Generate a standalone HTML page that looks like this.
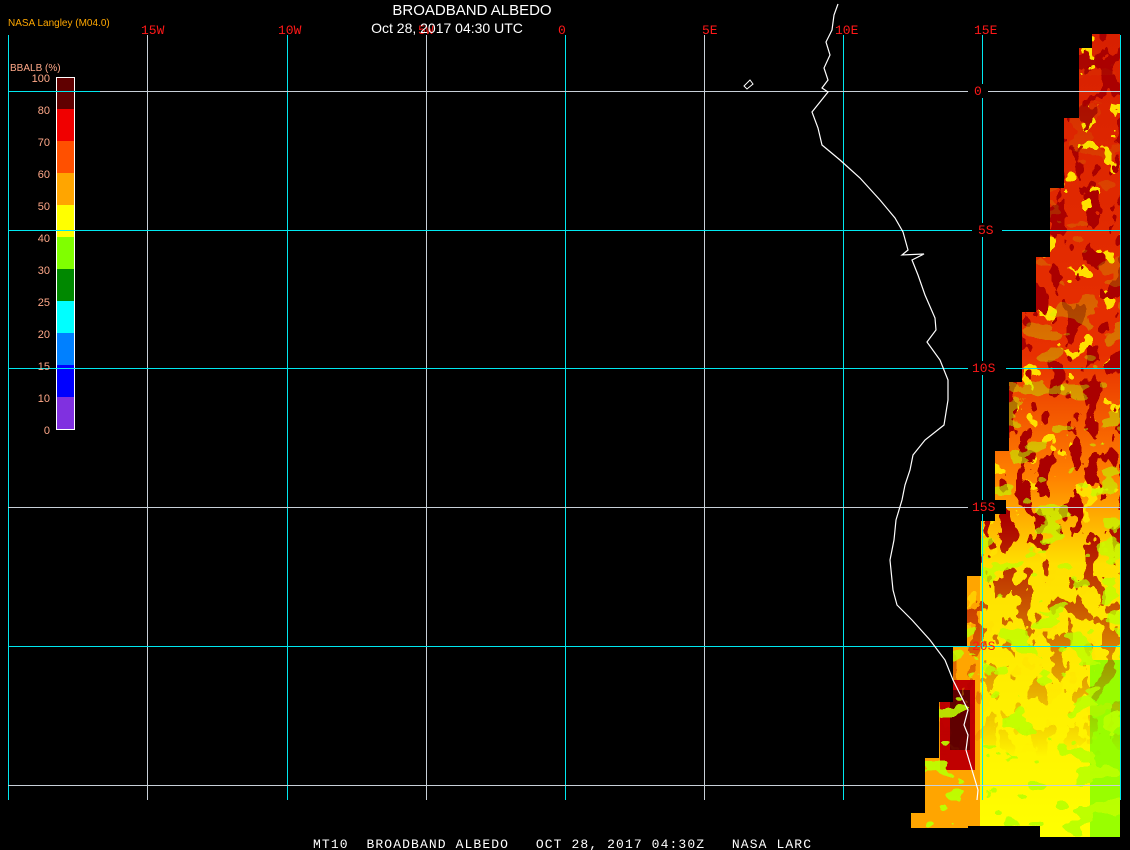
<!DOCTYPE html>
<html><head><meta charset="utf-8"><style>
html,body{margin:0;padding:0;background:#000;width:1130px;height:850px;overflow:hidden}
svg{display:block}
</style></head><body>
<svg width="1130" height="850" viewBox="0 0 1130 850" xmlns="http://www.w3.org/2000/svg">
<defs>
<clipPath id="dc"><polygon points="1092,34 1120,34 1120,837 1040,837 1040,826 968,826 968,828 911,828 911,813 925,813 925,758 939,758 939,702 953,702 953,646 967,646 967,576 981,576 981,521 995,521 995,451 1009,451 1009,382 1022,382 1022,312 1036,312 1036,257 1050,257 1050,188 1064,188 1064,118 1079,118 1079,48 1092,48"/></clipPath>
<linearGradient id="base" gradientUnits="userSpaceOnUse" x1="0" y1="34" x2="0" y2="837">
<stop offset="0" stop-color="#d82000"/>
<stop offset="0.4" stop-color="#e83000"/>
<stop offset="0.55" stop-color="#ff8000"/>
<stop offset="0.66" stop-color="#ffe000"/>
<stop offset="1" stop-color="#ffff00"/>
</linearGradient>
<linearGradient id="mTop" gradientUnits="userSpaceOnUse" x1="0" y1="34" x2="0" y2="837">
<stop offset="0" stop-color="#fff"/><stop offset="0.6" stop-color="#fff"/><stop offset="0.78" stop-color="#666"/><stop offset="0.9" stop-color="#000"/><stop offset="1" stop-color="#000"/>
</linearGradient>
<linearGradient id="mGr" gradientUnits="userSpaceOnUse" x1="0" y1="34" x2="0" y2="837">
<stop offset="0" stop-color="#000"/><stop offset="0.3" stop-color="#333"/><stop offset="0.6" stop-color="#aaa"/><stop offset="1" stop-color="#fff"/>
</linearGradient>
<mask id="mk1"><rect x="900" y="30" width="230" height="820" fill="url(#mTop)"/></mask>
<mask id="mk2"><rect x="900" y="30" width="230" height="820" fill="url(#mGr)"/></mask>
<filter id="fd" x="0" y="0" width="1" height="1">
<feTurbulence type="fractalNoise" baseFrequency="0.06 0.04" numOctaves="3" seed="4"/>
<feColorMatrix type="matrix" values="0 0 0 0 0.4  0 0 0 0 0  0 0 0 0 0  5 0 0 0 -2.35"/>
<feComponentTransfer><feFuncA type="discrete" tableValues="0 1"/></feComponentTransfer>
</filter>
<filter id="fy" x="0" y="0" width="1" height="1">
<feTurbulence type="fractalNoise" baseFrequency="0.05 0.05" numOctaves="3" seed="9"/>
<feColorMatrix type="matrix" values="0 0 0 0 1  0 0 0 0 0.75  0 0 0 0 0  5 0 0 0 -2.8"/>
<feComponentTransfer><feFuncA type="discrete" tableValues="0 1"/></feComponentTransfer>
</filter>
<filter id="fg" x="0" y="0" width="1" height="1">
<feTurbulence type="fractalNoise" baseFrequency="0.03 0.05" numOctaves="3" seed="17"/>
<feColorMatrix type="matrix" values="0 0 0 0 0.5  0 0 0 0 1  0 0 0 0 0  5 0 0 0 -2.6"/>
<feComponentTransfer><feFuncA type="discrete" tableValues="0 1"/></feComponentTransfer>
</filter>
</defs>

<g clip-path="url(#dc)">
<rect x="900" y="30" width="230" height="820" fill="url(#base)"/>
<rect x="900" y="560" width="80" height="280" fill="#ffa500"/>
<rect x="940" y="680" width="35" height="90" fill="#c00000"/>
<rect x="950" y="690" width="20" height="60" fill="#600000"/>
<rect x="1090" y="660" width="30" height="180" fill="#80ff00" opacity="0.8"/>
<rect x="900" y="30" width="230" height="820" filter="url(#fy)" mask="url(#mk1)"/>
<rect x="900" y="30" width="230" height="820" filter="url(#fd)" mask="url(#mk1)"/>
<rect x="900" y="30" width="230" height="820" filter="url(#fg)" mask="url(#mk2)"/>
</g>

<g stroke-width="1" fill="none" shape-rendering="crispEdges">
<line x1="8.5" y1="35" x2="8.5" y2="800" stroke="#00e8f0"/>
<line x1="147.5" y1="35" x2="147.5" y2="800" stroke="#c8d0d8"/>
<line x1="287.5" y1="35" x2="287.5" y2="800" stroke="#00e8f0"/>
<line x1="426.5" y1="35" x2="426.5" y2="800" stroke="#c8d0d8"/>
<line x1="565.5" y1="35" x2="565.5" y2="800" stroke="#00e8f0"/>
<line x1="704.5" y1="35" x2="704.5" y2="800" stroke="#c8d0d8"/>
<line x1="843.5" y1="35" x2="843.5" y2="800" stroke="#00e8f0"/>
<line x1="982.5" y1="35" x2="982.5" y2="800" stroke="#00e8f0"/>
<line x1="1120.5" y1="35" x2="1120.5" y2="800" stroke="#00e8f0"/>
<line x1="8" y1="91.5" x2="1120" y2="91.5" stroke="#c8d0d8"/>
<line x1="8" y1="230.5" x2="1120" y2="230.5" stroke="#00e8f0"/>
<line x1="8" y1="368.5" x2="1120" y2="368.5" stroke="#00e8f0"/>
<line x1="8" y1="507.5" x2="1120" y2="507.5" stroke="#c8d0d8"/>
<line x1="8" y1="646.5" x2="1120" y2="646.5" stroke="#00e8f0"/>
<line x1="8" y1="785.5" x2="1120" y2="785.5" stroke="#c8d0d8"/>
</g>

<polyline fill="none" stroke="#fff" stroke-width="1.2" points="838,4 834,15 832,30 826,42 830,55 824,68 828,80 822,88 828,92 812,112 818,128 822,145 840,160 860,178 880,200 895,218 903,232 908,250 902,255 924,254 912,260 918,275 925,295 935,318 936,330 927,342 940,360 948,380 948,400 944,425 925,440 913,455 910,470 905,485 902,500 896,520 894,540 890,560 893,590 897,605 912,620 930,640 945,660 953,680 962,698 968,710 964,725 968,735 966,750 972,770 978,790 977,800"/>
<polygon points="744,86 750,80 753,84 747,89" fill="none" stroke="#fff" stroke-width="1"/>

<g font-family="Liberation Mono, monospace" font-size="13" fill="#ff1818">
<text x="141" y="34">15W</text>
<text x="278" y="34">10W</text>
<text x="418" y="34">5W</text>
<text x="558" y="34">0</text>
<text x="702" y="34">5E</text>
<text x="835" y="34">10E</text>
<text x="974" y="34">15E</text>
</g>
<g font-family="Liberation Mono, monospace" font-size="13" fill="#ff1818">
<rect x="968" y="84" width="20" height="14" fill="#000"/><text x="974" y="95">0</text>
<rect x="972" y="223" width="30" height="14" fill="#000"/><text x="978" y="234">5S</text>
<rect x="968" y="361" width="38" height="14" fill="#000"/><text x="972" y="372">10S</text>
<rect x="968" y="500" width="38" height="14" fill="#000"/><text x="972" y="511">15S</text>
<text x="972" y="650">20S</text>
</g>

<text x="472" y="15" font-family="Liberation Sans, sans-serif" font-size="15" fill="#fff" text-anchor="middle">BROADBAND ALBEDO</text>
<text x="447" y="33" font-family="Liberation Sans, sans-serif" font-size="14" fill="#fff" text-anchor="middle">Oct 28, 2017 04:30 UTC</text>
<text x="8" y="26" font-family="Liberation Sans, sans-serif" font-size="10" fill="#ffa800">NASA Langley (M04.0)</text>

<text x="10" y="71" font-family="Liberation Sans, sans-serif" font-size="10" fill="#ffa888">BBALB (%)</text>
<g shape-rendering="crispEdges">
<rect x="56" y="77" width="18" height="32" fill="#600000"/>
<rect x="56" y="109" width="18" height="32" fill="#f00000"/>
<rect x="56" y="141" width="18" height="32" fill="#ff5000"/>
<rect x="56" y="173" width="18" height="32" fill="#ffa500"/>
<rect x="56" y="205" width="18" height="32" fill="#ffff00"/>
<rect x="56" y="237" width="18" height="32" fill="#80ff00"/>
<rect x="56" y="269" width="18" height="32" fill="#008800"/>
<rect x="56" y="301" width="18" height="32" fill="#00ffff"/>
<rect x="56" y="333" width="18" height="32" fill="#0080ff"/>
<rect x="56" y="365" width="18" height="32" fill="#0000ff"/>
<rect x="56" y="397" width="18" height="32" fill="#8030e0"/>
<rect x="56.5" y="77.5" width="18" height="352" fill="none" stroke="#fff"/>
<line x1="8" y1="91.5" x2="100" y2="91.5" stroke="#00e8f0"/>
<line x1="8" y1="230.5" x2="100" y2="230.5" stroke="#00e8f0"/>
<line x1="8" y1="368.5" x2="100" y2="368.5" stroke="#00e8f0"/>
</g>
<g font-family="Liberation Sans, sans-serif" font-size="11" fill="#ffa888" text-anchor="end">
<text x="50" y="82">100</text>
<text x="50" y="114">80</text>
<text x="50" y="146">70</text>
<text x="50" y="178">60</text>
<text x="50" y="210">50</text>
<text x="50" y="242">40</text>
<text x="50" y="274">30</text>
<text x="50" y="306">25</text>
<text x="50" y="338">20</text>
<text x="50" y="370">15</text>
<text x="50" y="402">10</text>
<text x="50" y="434">0</text>
</g>

<text x="313" y="848" font-family="Liberation Mono, monospace" font-size="13" fill="#fff" textLength="498" lengthAdjust="spacing" xml:space="preserve">MT10  BROADBAND ALBEDO   OCT 28, 2017 04:30Z   NASA LARC</text>
</svg>
</body></html>
